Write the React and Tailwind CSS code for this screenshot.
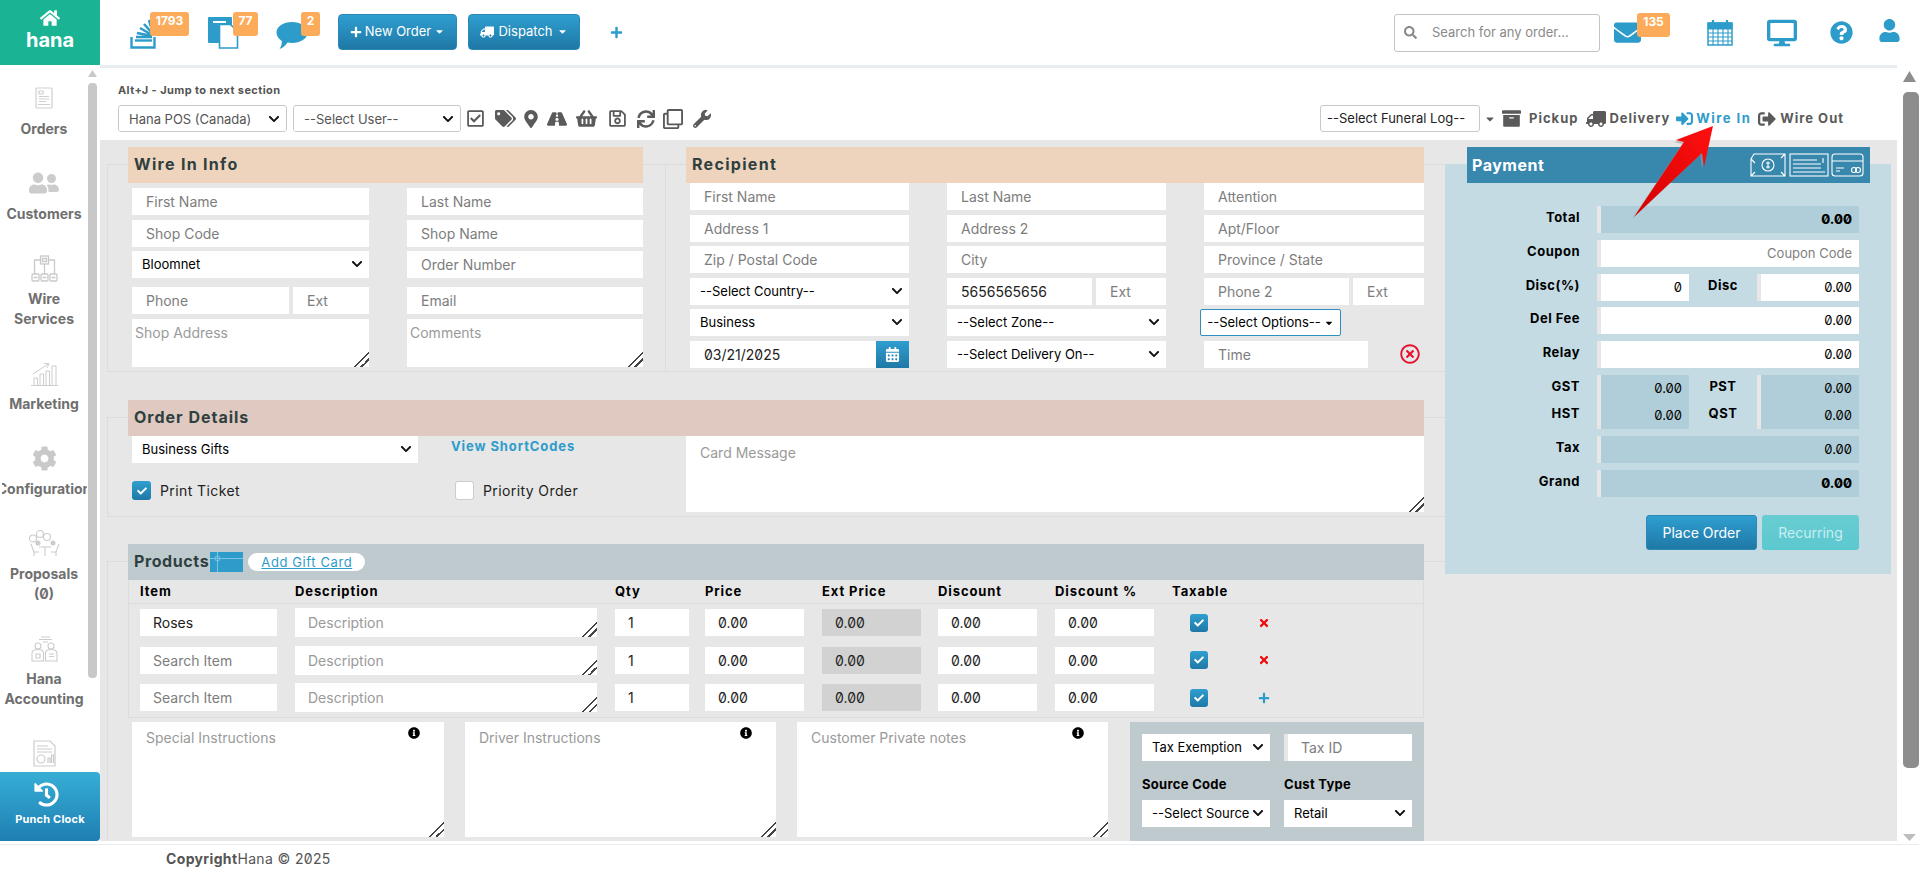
import React from 'react'
import {
  FaHome, FaPlus, FaTruck, FaSearch, FaEnvelope, FaDesktop, FaQuestionCircle, FaUser,
  FaRegCheckSquare, FaTags, FaMapMarkerAlt, FaRoad, FaShoppingBasket, FaRegSave, FaSync,
  FaRegClone, FaWrench, FaArchive, FaSignInAlt, FaSignOutAlt, FaCheck, FaTimes,
  FaInfoCircle, FaCalendarAlt, FaHistory, FaRegTimesCircle, FaCaretDown, FaUserFriends, FaCog,
  FaChevronDown,
} from 'react-icons/fa'

const field = 'h-[27px] text-[14px] text-[#222] placeholder:text-[#7d7d7d] outline-none'
const btnBlue = 'bg-gradient-to-b from-[#2f9fd0] to-[#1f78a6] border border-[#2a88b5] text-white'
// the drag handle in the reference is bigger and darker than the stock one
const handle = 'resize [&::-webkit-resizer]:[background:linear-gradient(135deg,transparent_47%,#444_47%,#444_55%,transparent_55%,transparent_70%,#444_70%,#444_78%,transparent_78%)]'

function TextField({ placeholder, className = '', value }) {
  return <input className={`${field} bg-white pl-[14px] min-w-0 ${className}`} placeholder={placeholder} defaultValue={value} />
}

function Select({ options, className = '', inner = 'text-black' }) {
  return (
    <div className={`relative h-[27px] min-w-0 ${className}`}>
      <select className={`w-full h-full appearance-none bg-white text-[13px] pl-[10px] pr-[20px] outline-none ${inner}`}>
        {options.map((o) => <option key={o}>{o}</option>)}
      </select>
      <FaChevronDown size={12} color="#111" className="absolute right-[6px] top-[7px] pointer-events-none" />
    </div>
  )
}

function Area({ placeholder, className = '' }) {
  return <textarea className={`bg-white text-[14px] placeholder:text-[#9a9a9a] outline-none block ${handle} ${className}`} placeholder={placeholder} />
}

function Check({ className = '' }) {
  return (
    <span className={`flex items-center justify-center rounded-[3px] bg-gradient-to-b from-[#2f9fd0] to-[#1f78a6] text-white ${className}`}>
      <FaCheck size={10} />
    </span>
  )
}

function Badge({ children, className = '' }) {
  return (
    <span className={`absolute top-[12px] h-[24px] rounded-[3px] bg-[#fbab5a] text-white text-[12px] font-bold text-center leading-[17px] ${className}`}>
      {children}
    </span>
  )
}

function StackIcon() {
  return (
    <svg width="26" height="32" viewBox="0 0 26 32" fill="none" stroke="#2e9ccb">
      <path d="M1.5 20v10.500h23V20" strokeWidth="2.400" />
      <path d="M5 23.500h17" strokeWidth="2.400" />
      <path d="M6 20h16M7 16l15 3M10 11l12 7M14 7l9 10M19 3l4 13" strokeWidth="2.600" />
    </svg>
  )
}

function DocIcon() {
  return (
    <svg width="33" height="33" viewBox="0 0 33 33">
      <path d="M2 1h22a1 1 0 0 1 1 1v25h-23a1 1 0 0 1-1-1V2a1 1 0 0 1 1-1z" fill="#2e9ccb" />
      <path d="M6 5h13v2H6z" fill="#fff" />
      <path d="M12.500 8.500h11l7 7v16.500h-18z" fill="#fff" stroke="#2e9ccb" strokeWidth="1.600" />
    </svg>
  )
}

function ChatIcon() {
  return (
    <svg width="32" height="29" viewBox="0 0 32 29">
      <path d="M16 1c8.500 0 15.500 4.500 15.500 10.500S24.500 22 16 22c-1.500 0-3-.1-4.300-.4C9.500 24.500 7 27 3.500 28c1.500-2.300 2.500-5 2.300-8C2.800 18 .5 15 .5 11.500 .5 5.500 7.500 1 16 1z" fill="#2e9ccb" />
    </svg>
  )
}

function CalendarIcon() {
  return (
    <svg width="26" height="27" viewBox="0 0 26 27" fill="none" stroke="#2e9ccb">
      <path d="M1 4h24v22H1z" fill="#fff" strokeWidth="1.500" />
      <path d="M1 4h24v6H1z" fill="#2e9ccb" />
      <path d="M6 1v5M20 1v5" strokeWidth="2.200" />
      <path d="M1 14h24M1 18h24M1 22h24M6 10v16M11 10v16M16 10v16M21 10v16" strokeWidth="1.100" />
    </svg>
  )
}

function OrdersIcon() {
  return (
    <svg width="18" height="22" viewBox="0 0 18 22" fill="none" stroke="#cfcfcf" strokeWidth="1.200">
      <rect x="1" y="1" width="16" height="20" rx="1" />
      <path d="M4 4h4v3H4zM4 9.500h10M4 12h10M4 14.500h7M3 17.500h12" />
    </svg>
  )
}

function WireIcon() {
  return (
    <svg width="27" height="27" viewBox="0 0 27 27" fill="none" stroke="#c9c9c9" strokeWidth="1.300">
      <rect x="9.500" y="1" width="8" height="8" />
      <path d="M11.500 3.500h4v3h-4zM13.500 9v10M9.500 5h-6v14M17.500 5h6v14" />
      <rect x="1" y="19" width="7" height="7" rx="1" />
      <rect x="10" y="19" width="7" height="7" rx="1" />
      <rect x="19" y="19" width="7" height="7" rx="1" />
      <path d="M2.500 22.500h4M11.500 22.500h4M20.500 22.500h4" />
    </svg>
  )
}

function MarketingIcon() {
  return (
    <svg width="27" height="25" viewBox="0 0 27 25" fill="none" stroke="#cdcdcd" strokeWidth="1">
      <path d="M0 24.500h27M3 24v-7h3.500v7M9 24V13h3.500v11M15 24V10h3.500v14M21 24V5h4v19" />
      <path d="M2 13L17 3M13 2.500l5 .2-2 4.300" />
    </svg>
  )
}

function ProposalsIcon() {
  return (
    <svg width="33" height="28" viewBox="0 0 33 28" fill="none" stroke="#cccccc" strokeWidth="1.100">
      <circle cx="5" cy="9.500" r="3.500" />
      <circle cx="12" cy="5" r="3.500" />
      <circle cx="19" cy="8" r="3.500" />
      <circle cx="10" cy="14" r="2" fill="#cccccc" />
      <circle cx="25" cy="14" r="2" fill="#cccccc" />
      <path d="M3 15l3 8h5M6 23v4M31 15l-3 8h-5M28 23v4M11 18h12M17 18v9" />
    </svg>
  )
}

function AccountingIcon() {
  return (
    <svg width="27" height="27" viewBox="0 0 27 27" fill="none" stroke="#cccccc" strokeWidth="1.100">
      <path d="M10 2h9M8 4.500h13M12 7h5" />
      <circle cx="7" cy="11" r="3" />
      <circle cx="20" cy="11" r="3" />
      <path d="M1 26v-8c0-2 2-3.500 6-3.500s5.500 1.500 5.500 3.500v8zM14.500 26v-8c0-2 1.500-3.500 5.500-3.500s6 1.500 6 3.500v8z" />
      <path d="M5 19h4v4H5zM18 19h5M18 21.500h5" />
    </svg>
  )
}

function ReportIcon() {
  return (
    <svg width="23" height="27" viewBox="0 0 23 27" fill="none" stroke="#cccccc" strokeWidth="1.200">
      <path d="M1 1h16l5 5v20H1z" />
      <path d="M4 6h11M4 9h15M4 12h15" />
      <circle cx="8" cy="19" r="4" />
      <path d="M15 23v-5h2v5M18.500 23v-8h2v8" />
    </svg>
  )
}

function NavItem({ icon, lines }) {
  return (
    <div className="flex flex-col items-center pb-[29px]">
      <div className="h-[30px] flex items-center justify-center">{icon}</div>
      <div className="mt-[6px] w-[85px] text-center text-[14px] font-bold leading-[20px] text-[#6f6f6f] whitespace-nowrap overflow-hidden flex flex-col items-center">
        {lines.map((l) => <span key={l}>{l}</span>)}
      </div>
    </div>
  )
}

function Sidebar() {
  return (
    <div className="w-[100px] shrink-0 flex flex-col bg-white">
      <div className="h-[65px] bg-[#1ab394] text-white flex flex-col items-center pt-[8px]">
        <FaHome size={20} />
        <span className="text-[20px] font-bold leading-[25px]">hana</span>
      </div>
      <div className="flex-1 flex min-h-0">
        <div className="w-[88px] pt-[18px] overflow-hidden">
          <NavItem icon={<OrdersIcon />} lines={['Orders']} />
          <NavItem icon={<FaUserFriends size={30} color="#cccccc" />} lines={['Customers']} />
          <NavItem icon={<WireIcon />} lines={['Wire', 'Services']} />
          <NavItem icon={<MarketingIcon />} lines={['Marketing']} />
          <NavItem icon={<FaCog size={25} color="#c9c9c9" />} lines={['Configuration']} />
          <NavItem icon={<ProposalsIcon />} lines={['Proposals', '(0)']} />
          <NavItem icon={<AccountingIcon />} lines={['Hana', 'Accounting']} />
          <NavItem icon={<ReportIcon />} lines={['']} />
        </div>
        <div className="w-[9px] pt-[5px]">
          <svg width="9" height="7" viewBox="0 0 9 7"><path d="M4.500 0L9 7H0z" fill="#c8c8c8" /></svg>
          <div className="mt-[6px] h-[595px] rounded-[4px] bg-[#c8c8c8]" />
        </div>
      </div>
      <div className="h-[69px] rounded-r-[4px] bg-gradient-to-b from-[#37aed5] to-[#1f7fb3] text-white flex flex-col items-center pt-[10px]">
        <FaHistory size={25} className="mr-[8px] -scale-x-100 -scale-y-100 rotate-180" />
        <span className="mt-[5px] text-[11px] font-bold leading-[14px] tracking-[0.2px]">Punch Clock</span>
      </div>
    </div>
  )
}

function Header() {
  return (
    <div className="h-[65px] flex items-center bg-white pl-[30px] pr-[18px]">
      <div className="relative w-[26px] h-[65px] pt-[17px]"><StackIcon /><Badge className="left-[20px] w-[39px]">1793</Badge></div>
      <div className="relative w-[33px] h-[65px] ml-[51px] pt-[16px]"><DocIcon /><Badge className="left-[26px] w-[25px]">77</Badge></div>
      <div className="relative w-[32px] h-[65px] ml-[36px] pt-[21px]"><ChatIcon /><Badge className="left-[25px] w-[19px]">2</Badge></div>
      <button className={`${btnBlue} ml-[30px] mb-[2px] w-[119px] h-[36px] rounded-[4px] text-[13px] flex items-center justify-center gap-[3px]`}>
        <FaPlus size={12} /> New Order <FaCaretDown size={11} />
      </button>
      <button className={`${btnBlue} ml-[11px] mb-[2px] w-[112px] h-[36px] rounded-[4px] text-[13px] flex items-center justify-center gap-[4px]`}>
        <FaTruck size={14} className="-scale-x-100" /> Dispatch <FaCaretDown size={11} />
      </button>
      <FaPlus size={13} color="#2e9ccb" className="ml-[30px]" />
      <div className="ml-auto w-[206px] h-[38px] border border-[#c4c4c4] rounded-[3px] flex items-center pl-[9px] text-[#8a8a8a]">
        <FaSearch size={13} />
        <input className="ml-[15px] flex-1 min-w-0 text-[13px] outline-none placeholder:text-[#8a8a8a]" placeholder="Search for any order..." />
      </div>
      <div className="relative ml-[14px] w-[27px] h-[65px] flex items-center">
        <FaEnvelope size={27} color="#2e9ccb" />
        <Badge className="left-[23px] w-[33px] top-[13px]">135</Badge>
      </div>
      <div className="ml-[66px]"><CalendarIcon /></div>
      <FaDesktop size={30} color="#2e9ccb" className="ml-[34px]" />
      <FaQuestionCircle size={23} color="#2e9ccb" className="ml-[33px]" />
      <FaUser size={23} color="#2e9ccb" className="ml-[25px] -translate-y-[2px]" />
    </div>
  )
}

function Toolbar() {
  const toolSelect = 'border border-[#c9c9c9] rounded-[3px] overflow-hidden'
  return (
    <div className="h-[72px] bg-white pl-[18px] pr-[53px] pt-[15px]">
      <div className="text-[11px] font-bold leading-[14px] text-[#555] tracking-[0.4px]">Alt+J - Jump to next section</div>
      <div className="mt-[8px] flex items-center text-[#5a5a5a]">
        <Select options={['Hana POS (Canada)']} className={`w-[169px] ${toolSelect}`} inner="text-[#555]" />
        <Select options={['--Select User--']} className={`ml-[6px] w-[168px] ${toolSelect}`} inner="text-[#555]" />
        <FaRegCheckSquare size={19} className="ml-[5px]" />
        <FaTags size={21} className="ml-[10px]" />
        <FaMapMarkerAlt size={18} className="ml-[6px]" />
        <FaRoad size={20} className="ml-[7px]" />
        <FaShoppingBasket size={21} className="ml-[9px]" />
        <FaRegSave size={19} className="ml-[11px]" />
        <FaSync size={18} className="ml-[10px]" />
        <FaRegClone size={20} className="ml-[8px]" />
        <FaWrench size={18} className="ml-[10px]" />
        <select className="ml-auto w-[160px] h-[27px] bg-white border border-[#c9c9c9] rounded-[3px] pl-[6px] text-[13px] text-[#222] appearance-none"><option>--Select Funeral Log--</option></select>
        <FaCaretDown size={12} className="ml-[4px]" />
        <FaArchive size={19} className="ml-[6px]" />
        <span className="ml-[8px] text-[13px] font-bold tracking-[1px]">Pickup</span>
        <FaTruck size={20} className="ml-[8px] -scale-x-100" />
        <span className="ml-[3px] text-[13px] font-bold tracking-[1px]">Delivery</span>
        <FaSignInAlt size={17} color="#2e9ccb" className="ml-[6px]" />
        <span className="ml-[3px] text-[13px] font-bold tracking-[1.500px] text-[#2e9ccb]">Wire In</span>
        <FaSignOutAlt size={18} className="ml-[7px]" />
        <span className="ml-[4px] text-[13px] font-bold tracking-[1px]">Wire Out</span>
      </div>
    </div>
  )
}

function SectionBar({ title, className = '', children }) {
  return (
    <div className={`h-[36px] -mt-[18px] ml-[20px] flex items-center pl-[6px] pb-[2px] text-[16px] font-bold text-[#2f3f3f] ${className}`}>
      {title}
      {children}
    </div>
  )
}

function WireInInfo() {
  return (
    <div className="w-[558px] h-[208px] shrink-0 border border-[#dcdcdc] border-r-0">
      <SectionBar title="Wire In Info" className="w-[515px] bg-[#eed4bd] tracking-[1.3px]" />
      <div className="pl-[24px] pt-[5px] flex gap-[38px]">
        <div className="w-[237px] flex flex-col">
          <TextField placeholder="First Name" />
          <TextField placeholder="Shop Code" className="mt-[5px]" />
          <Select options={['Bloomnet']} className="mt-[4px]" />
          <div className="mt-[9px] flex gap-[4px]">
            <TextField placeholder="Phone" className="w-[157px]" />
            <TextField placeholder="Ext" className="w-[76px] pl-[13px]" />
          </div>
          <Area placeholder="Shop Address" className="mt-[5px] h-[48px] pl-[3px] pt-[3px]" />
        </div>
        <div className="w-[236px] flex flex-col">
          <TextField placeholder="Last Name" className="pl-[13px]" />
          <TextField placeholder="Shop Name" className="mt-[5px] pl-[13px]" />
          <TextField placeholder="Order Number" className="mt-[4px] pl-[13px]" />
          <TextField placeholder="Email" className="mt-[9px] pl-[13px]" />
          <Area placeholder="Comments" className="mt-[5px] h-[48px] pl-[3px] pt-[3px]" />
        </div>
      </div>
    </div>
  )
}

function Recipient() {
  return (
    <div className="flex-1 h-[208px] border-t border-b border-l border-[#dcdcdc]">
      <SectionBar title="Recipient" className="w-[738px] bg-[#eed4bd] tracking-[1.3px]" />
      <div className="pl-[24px] grid grid-cols-[219px_219px_220px] gap-x-[38px] gap-y-[4.500px]">
        <TextField placeholder="First Name" />
        <TextField placeholder="Last Name" />
        <TextField placeholder="Attention" />
        <TextField placeholder="Address 1" />
        <TextField placeholder="Address 2" />
        <TextField placeholder="Apt/Floor" />
        <TextField placeholder="Zip / Postal Code" />
        <TextField placeholder="City" />
        <TextField placeholder="Province / State" />
        <Select options={['--Select Country--']} />
        <div className="flex gap-[4px]">
          <TextField value="5656565656" className="w-[145px]" />
          <TextField placeholder="Ext" className="w-[70px]" />
        </div>
        <div className="flex gap-[4px]">
          <TextField placeholder="Phone 2" className="w-[145px]" />
          <TextField placeholder="Ext" className="w-[71px]" />
        </div>
        <Select options={['Business']} />
        <Select options={['--Select Zone--']} />
        <button className="-ml-[4px] w-[141px] h-[27px] bg-white border border-[#2f8fc0] rounded-[2px] text-[13px] text-black flex items-center justify-center gap-[3px]">
          --Select Options-- <FaCaretDown size={10} />
        </button>
        <div className="flex">
          <TextField value="03/21/2025" className="flex-1" />
          <span className="w-[33px] h-[27px] flex items-center justify-center bg-gradient-to-b from-[#2f9fd0] to-[#1f78a6] text-white"><FaCalendarAlt size={15} /></span>
        </div>
        <Select options={['--Select Delivery On--']} />
        <div className="flex items-center">
          <TextField placeholder="Time" className="w-[164px]" />
          <FaRegTimesCircle size={20} color="#e8112d" className="ml-[32px]" />
        </div>
      </div>
    </div>
  )
}

function OrderDetails() {
  return (
    <div className="mt-[45px] h-[100px] border border-r-0 border-[#dcdcdc]">
      <SectionBar title="Order Details" className="w-[1296px] bg-[#dfc9c0] tracking-[1px]" />
      <div className="pl-[24px] flex">
        <div className="w-[554px]">
          <div className="flex items-start">
            <Select options={['Business Gifts']} className="w-[286px]" />
            <a className="ml-[33px] mt-[1px] text-[13px] font-bold tracking-[0.9px] text-[#2e9ccb]">View ShortCodes</a>
          </div>
          <div className="mt-[17px] flex items-center text-[14px] tracking-[0.4px] text-[#222]">
            <div className="w-[323px] flex items-center">
              <Check className="w-[19px] h-[19px]" />
              <span className="ml-[9px]">Print Ticket</span>
            </div>
            <span className="w-[19px] h-[19px] bg-white border border-[#ccc] rounded-[3px]" />
            <span className="ml-[9px]">Priority Order</span>
          </div>
        </div>
        <Area placeholder="Card Message" className="w-[738px] h-[76px] pl-[14px] pt-[6px]" />
      </div>
    </div>
  )
}

const cols = [
  'w-[137px] mr-[18px]', 'w-[302px] mr-[18px]', 'w-[74px] mr-[16px]', 'w-[99px] mr-[18px]',
  'w-[99px] mr-[17px]', 'w-[99px] mr-[18px]', 'w-[99px] mr-[18px]',
]

function NumBox({ col, grey }) {
  return (
    <input
      className={`${cols[col]} ${field} pl-[13px] ${grey ? 'bg-[#d2d2d2]' : 'bg-white'}`}
      defaultValue="0.00"
    />
  )
}

function ProductRow({ item, add }) {
  return (
    <div className="h-[37.500px] pl-[11px] flex items-center">
      <input className={`${cols[0]} ${field} bg-white pl-[13px]`} placeholder="Search Item" defaultValue={item} />
      <textarea className={`${cols[1]} h-[29px] bg-white text-[14px] pl-[13px] pt-[4px] outline-none placeholder:text-[#9a9a9a] ${handle}`} placeholder="Description" />
      <input className={`${cols[2]} ${field} bg-white pl-[13px]`} defaultValue="1" />
      <NumBox col={3} />
      <NumBox col={4} grey />
      <NumBox col={5} />
      <NumBox col={6} />
      <Check className="ml-[18px] w-[18px] h-[18px]" />
      {add
        ? <FaPlus size={12} color="#2e9ccb" className="ml-[50px]" />
        : <FaTimes size={12} color="#ee0a0a" className="ml-[50px]" />}
    </div>
  )
}

function NoteBox({ placeholder, className = '' }) {
  return (
    <div className={`relative ${className}`}>
      <Area placeholder={placeholder} className="w-full h-[115px] pl-[14px] pt-[5px]" />
      <FaInfoCircle size={12} color="#000" className="absolute top-[5px] right-[24px]" />
    </div>
  )
}

function Products() {
  return (
    <div className="mt-[44px] border-t border-l border-[#dcdcdc]">
      <SectionBar title="Products" className="w-[1296px] bg-[#bfcacf] tracking-[0.6px]">
        <svg className="ml-[1px] mt-[2px]" width="33" height="20" viewBox="0 0 33 20">
          <rect width="33" height="20" fill="#2e9ccb" />
          <path d="M0 6.500h33M7.500 0v20" stroke="#7cc3e2" strokeWidth="1" />
          <circle cx="7.500" cy="6.500" r="2.500" fill="none" stroke="#7cc3e2" />
        </svg>
        <a className="ml-[5px] mt-[2px] h-[18px] w-[117px] rounded-full bg-white text-center text-[13px] leading-[18px] font-normal tracking-[0.6px] text-[#2e9ccb] underline">Add Gift Card</a>
      </SectionBar>
      <div className="ml-[20px] w-[1296px] border-x border-b border-[#dcdcdc]">
        <div className="h-[24px] pl-[11px] flex items-center border-b border-[#dcdcdc] text-[13px] font-bold tracking-[0.9px] text-black">
          <span className={cols[0]}>Item</span>
          <span className={cols[1]}>Description</span>
          <span className={cols[2]}>Qty</span>
          <span className={cols[3]}>Price</span>
          <span className={cols[4]}>Ext Price</span>
          <span className={cols[5]}>Discount</span>
          <span className={cols[6]}>Discount %</span>
          <span>Taxable</span>
        </div>
        <ProductRow item="Roses" />
        <ProductRow />
        <ProductRow add />
      </div>
      <div className="ml-[24px] mt-[4px] flex">
        <NoteBox placeholder="Special Instructions" className="w-[312px]" />
        <NoteBox placeholder="Driver Instructions" className="w-[311px] ml-[21px]" />
        <NoteBox placeholder="Customer Private notes" className="w-[311px] ml-[21px]" />
        <div className="ml-[22px] w-[294px] h-[119px] bg-[#bfcacf] pl-[12px] pt-[12px]">
          <div className="flex gap-[14px]">
            <Select options={['Tax Exemption']} className="w-[128px]" />
            <input className={`${field} bg-white w-[128px] pl-[13px] border-l-[4px] border-[#e7e7e7]`} placeholder="Tax ID" />
          </div>
          <div className="mt-[14px] flex gap-[14px] text-[13px] font-bold leading-[18px] tracking-[0.3px] text-black">
            <span className="w-[128px]">Source Code</span>
            <span className="w-[128px]">Cust Type</span>
          </div>
          <div className="mt-[7px] flex gap-[14px]">
            <Select options={['--Select Source--']} className="w-[128px]" />
            <Select options={['Retail']} className="w-[128px]" />
          </div>
        </div>
      </div>
    </div>
  )
}

function PayRow({ label, children, tall }) {
  return (
    <div className={`flex ${tall ? 'h-[54px]' : 'h-[27px]'}`}>
      <div className="w-[135px] text-right text-[13px] font-bold leading-[22px] tracking-[0.5px] text-black">{label}</div>
      <div className="ml-[17px] w-[262px] flex">{children}</div>
    </div>
  )
}

function PayValue({ value = '0.00', kind = 'ro', bold, className = '' }) {
  const bg = kind === 'ro' ? 'bg-[#b0ced9]' : 'bg-white'
  return (
    <div className={`h-full border-l-[4px] border-[#e7e7e7] ${bg} text-right pr-[7px] text-[13px] leading-[27px] text-black ${bold ? 'font-extrabold' : ''} ${className}`}>
      {value}
    </div>
  )
}

function Payment() {
  const splitLabel = 'w-[68px] text-center text-[13px] font-bold leading-[22px] tracking-[0.5px] text-black'
  return (
    <div className="w-[446px] h-[410px] mt-[24px] bg-[#c5dbe3]">
      <div className="h-[36px] -mt-[17px] ml-[22px] w-[403px] bg-[#3887ad] text-white text-[16px] font-bold tracking-[0.5px] pl-[5px] flex items-center justify-between pr-[6px]">
        Payment
        <svg width="114" height="24" viewBox="0 0 114 24" fill="none" stroke="#fff" strokeWidth="1.100">
          <path d="M4 1h31v22H1V6zM1 6l4 4M35 23l-4-4M1 23l4-4M35 1l-4 4" />
          <circle cx="18" cy="12" r="6" />
          <path d="M18 8.500v7M16 10h4M16 14h4" />
          <rect x="40" y="1" width="38" height="22" />
          <path d="M43 7h24M43 11h28M43 15h28M43 19h32M73 5v5" />
          <rect x="82" y="1" width="31" height="22" rx="3" />
          <path d="M82 8h31M86 15h8M86 18h4" />
          <circle cx="104" cy="17" r="2.500" />
          <circle cx="108" cy="17" r="2.500" />
        </svg>
      </div>
      <div className="mt-[23px] flex flex-col gap-[6.800px]">
        <PayRow label="Total"><PayValue bold className="w-full" /></PayRow>
        <PayRow label="Coupon">
          <input className="w-full h-full border-l-[4px] border-[#e7e7e7] bg-white text-right pr-[7px] text-[13px] outline-none placeholder:text-[#808080]" placeholder="Coupon Code" />
        </PayRow>
        <PayRow label="Disc(%)">
          <PayValue value="0" kind="w" className="w-[92px]" />
          <span className={splitLabel}>Disc</span>
          <PayValue kind="w" className="w-[102px]" />
        </PayRow>
        <PayRow label="Del Fee"><PayValue kind="w" className="w-full" /></PayRow>
        <PayRow label="Relay"><PayValue kind="w" className="w-full" /></PayRow>
        <PayRow tall label={<div className="flex flex-col gap-[5px]"><span>GST</span><span>HST</span></div>}>
          <div className="w-[92px] flex flex-col"><PayValue /><PayValue /></div>
          <div className={`${splitLabel} flex flex-col gap-[5px]`}><span>PST</span><span>QST</span></div>
          <div className="w-[102px] flex flex-col"><PayValue /><PayValue /></div>
        </PayRow>
        <PayRow label="Tax"><PayValue className="w-full" /></PayRow>
        <PayRow label="Grand"><PayValue bold className="w-full" /></PayRow>
      </div>
      <div className="mt-[18px] pr-[32px] flex justify-end gap-[5px] text-[14px] text-white">
        <button className={`${btnBlue} w-[111px] h-[35px] rounded-[3px]`}>Place Order</button>
        <button className="w-[97px] h-[35px] rounded-[3px] bg-gradient-to-b from-[#68cdd2] to-[#5cc8cf] text-[#c9eef0]">Recurring</button>
      </div>
    </div>
  )
}

function PageScrollbar() {
  return (
    <div className="w-[22px] shrink-0 pl-[6px] pt-[6px] flex flex-col bg-white">
      <svg width="13" height="11" viewBox="0 0 13 11"><path d="M6.500 0L13 11H0z" fill="#8d8d8d" /></svg>
      <div className="mt-[10px] h-[677px] bg-[#8d8d8d] rounded-[5px]" />
      <svg className="mt-[66px]" width="13" height="7" viewBox="0 0 13 7"><path d="M0 0h13L6.500 7z" fill="#bdbdbd" /></svg>
    </div>
  )
}

function RedArrow() {
  return (
    <svg className="absolute left-[1620px] top-[115px]" width="110" height="115" viewBox="1620 115 110 115">
      <defs>
        <linearGradient id="arrowRed" x1="0" y1="1" x2="1" y2="0">
          <stop offset="0" stopColor="#d40000" />
          <stop offset="1" stopColor="#ff1010" />
        </linearGradient>
      </defs>
      <path d="M1713 126l-9 41-2-14-68 64 50-75-8-2z" transform="translate(-2 2)" fill="#9a9a9a" opacity=".55" />
      <path d="M1713 126l-9 41-2-14-68 64 50-75-8-2z" fill="url(#arrowRed)" />
    </svg>
  )
}

export default function App() {
  return (
    <div className="relative h-screen flex flex-col overflow-hidden bg-white font-[Inter,sans-serif] slashed-zero">
      <div className="h-[841px] flex shrink-0">
        <Sidebar />
        <div className="flex-1 min-w-0 flex flex-col">
          <Header />
          <div className="flex-1 flex min-h-0">
            <div className="w-[1797px] flex flex-col border-t-[3px] border-[#e8edf1]">
              <Toolbar />
              <div className="flex-1 min-h-0 flex bg-[#e7e7e7] overflow-hidden">
                <div className="w-[1345px] pl-[7px] pt-[24px]">
                  <div className="flex">
                    <WireInInfo />
                    <Recipient />
                  </div>
                  <OrderDetails />
                  <Products />
                </div>
                <Payment />
              </div>
            </div>
            <PageScrollbar />
          </div>
        </div>
      </div>
      <div className="mt-[3px] flex-1 border-t border-[#e8edf1] pl-[166px] text-[14px] leading-[28px] tracking-[0.35px] text-[#555]">
        <span className="font-bold">Copyright</span>Hana © 2025
      </div>
      <RedArrow />
    </div>
  )
}
